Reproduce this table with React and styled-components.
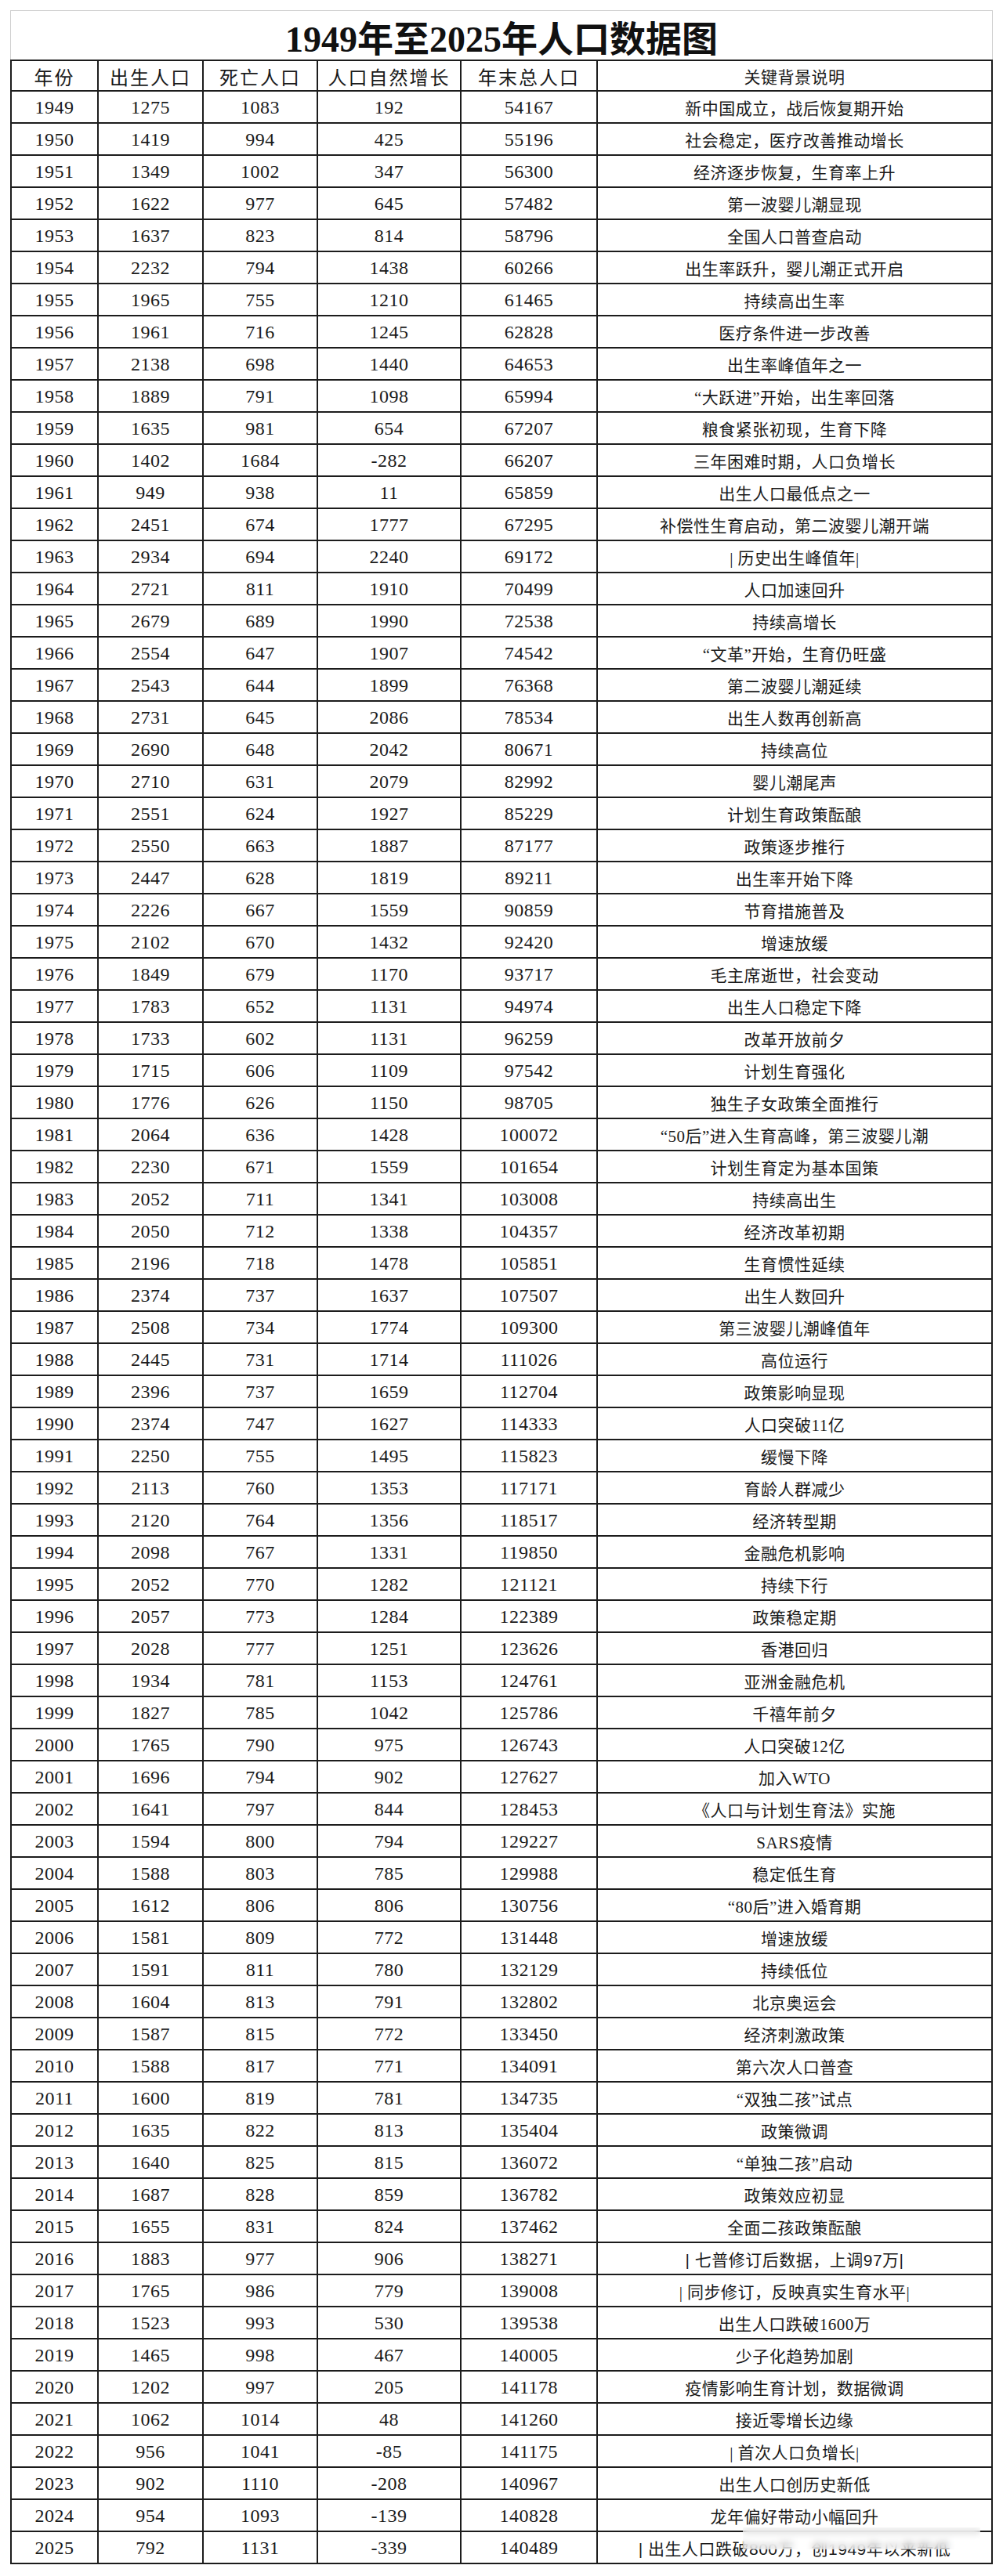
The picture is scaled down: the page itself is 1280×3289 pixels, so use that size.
import React from 'react'
import styled, { createGlobalStyle } from 'styled-components'

const GlobalStyle = createGlobalStyle`
    body {
        margin: 0;
        background: #ffffff;
    }
`

const raw = `1949 1275 1083 192 54167 新中国成立，战后恢复期开始
1950 1419 994 425 55196 社会稳定，医疗改善推动增长
1951 1349 1002 347 56300 经济逐步恢复，生育率上升
1952 1622 977 645 57482 第一波婴儿潮显现
1953 1637 823 814 58796 全国人口普查启动
1954 2232 794 1438 60266 出生率跃升，婴儿潮正式开启
1955 1965 755 1210 61465 持续高出生率
1956 1961 716 1245 62828 医疗条件进一步改善
1957 2138 698 1440 64653 出生率峰值年之一
1958 1889 791 1098 65994 “大跃进”开始，出生率回落
1959 1635 981 654 67207 粮食紧张初现，生育下降
1960 1402 1684 -282 66207 三年困难时期，人口负增长
1961 949 938 11 65859 出生人口最低点之一
1962 2451 674 1777 67295 补偿性生育启动，第二波婴儿潮开端
1963 2934 694 2240 69172 | 历史出生峰值年|
1964 2721 811 1910 70499 人口加速回升
1965 2679 689 1990 72538 持续高增长
1966 2554 647 1907 74542 “文革”开始，生育仍旺盛
1967 2543 644 1899 76368 第二波婴儿潮延续
1968 2731 645 2086 78534 出生人数再创新高
1969 2690 648 2042 80671 持续高位
1970 2710 631 2079 82992 婴儿潮尾声
1971 2551 624 1927 85229 计划生育政策酝酿
1972 2550 663 1887 87177 政策逐步推行
1973 2447 628 1819 89211 出生率开始下降
1974 2226 667 1559 90859 节育措施普及
1975 2102 670 1432 92420 增速放缓
1976 1849 679 1170 93717 毛主席逝世，社会变动
1977 1783 652 1131 94974 出生人口稳定下降
1978 1733 602 1131 96259 改革开放前夕
1979 1715 606 1109 97542 计划生育强化
1980 1776 626 1150 98705 独生子女政策全面推行
1981 2064 636 1428 100072 “50后”进入生育高峰，第三波婴儿潮
1982 2230 671 1559 101654 计划生育定为基本国策
1983 2052 711 1341 103008 持续高出生
1984 2050 712 1338 104357 经济改革初期
1985 2196 718 1478 105851 生育惯性延续
1986 2374 737 1637 107507 出生人数回升
1987 2508 734 1774 109300 第三波婴儿潮峰值年
1988 2445 731 1714 111026 高位运行
1989 2396 737 1659 112704 政策影响显现
1990 2374 747 1627 114333 人口突破11亿
1991 2250 755 1495 115823 缓慢下降
1992 2113 760 1353 117171 育龄人群减少
1993 2120 764 1356 118517 经济转型期
1994 2098 767 1331 119850 金融危机影响
1995 2052 770 1282 121121 持续下行
1996 2057 773 1284 122389 政策稳定期
1997 2028 777 1251 123626 香港回归
1998 1934 781 1153 124761 亚洲金融危机
1999 1827 785 1042 125786 千禧年前夕
2000 1765 790 975 126743 人口突破12亿
2001 1696 794 902 127627 加入WTO
2002 1641 797 844 128453 《人口与计划生育法》实施
2003 1594 800 794 129227 SARS疫情
2004 1588 803 785 129988 稳定低生育
2005 1612 806 806 130756 “80后”进入婚育期
2006 1581 809 772 131448 增速放缓
2007 1591 811 780 132129 持续低位
2008 1604 813 791 132802 北京奥运会
2009 1587 815 772 133450 经济刺激政策
2010 1588 817 771 134091 第六次人口普查
2011 1600 819 781 134735 “双独二孩”试点
2012 1635 822 813 135404 政策微调
2013 1640 825 815 136072 “单独二孩”启动
2014 1687 828 859 136782 政策效应初显
2015 1655 831 824 137462 全面二孩政策酝酿
2016 1883 977 906 138271 | 七普修订后数据，上调97万|
2017 1765 986 779 139008 | 同步修订，反映真实生育水平|
2018 1523 993 530 139538 出生人口跌破1600万
2019 1465 998 467 140005 少子化趋势加剧
2020 1202 997 205 141178 疫情影响生育计划，数据微调
2021 1062 1014 48 141260 接近零增长边缘
2022 956 1041 -85 141175 | 首次人口负增长|
2023 902 1110 -208 140967 出生人口创历史新低
2024 954 1093 -139 140828 龙年偏好带动小幅回升
2025 792 1131 -339 140489 | 出生人口跌破800万，创1949年以来新低`

const rows = raw.split('\n').map(line => {
    const parts = line.split(' ')
    return { cells: parts.slice(0, 5), note: parts.slice(5).join(' ') }
})

const sansNotes = ['2016', '2025']

const headers = ['年份', '出生人口', '死亡人口', '人口自然增长', '年末总人口', '关键背景说明']

const Page = styled.div`
    width: 1280px;
    min-height: 3289px;
    padding: 13px;
    box-sizing: border-box;
    background: #fff;
`

const Sheet = styled.div`
    width: 1254px;
`

const Title = styled.div`
    height: 63px;
    box-sizing: border-box;
    border: 1px solid #cfcfcf;
    border-bottom: none;
    display: flex;
    align-items: center;
    justify-content: center;
    font-family: "Liberation Serif", "Noto Sans CJK SC", serif;
    font-weight: 700;
    font-size: 46px;
    color: #111;
    padding-top: 2px;
`

const Row = styled.div`
    display: grid;
    grid-template-columns: 113px 134px 146px 183px 174px 504px;
    height: 41px;
`

const Cell = styled.div`
    position: relative;
    box-sizing: border-box;
    border-right: 2px solid #1c1c1c;
    border-bottom: 2px solid #1c1c1c;
    border-top: ${p => (p.$head ? '2px solid #1c1c1c' : 'none')};
    display: flex;
    align-items: center;
    justify-content: center;
    white-space: nowrap;
    font-family: ${p => (p.$sans
        ? '"Liberation Sans", "Noto Sans CJK SC", sans-serif'
        : '"Liberation Serif", "Noto Sans CJK SC", serif')};
    font-weight: 400;
    font-size: ${p => (p.$note ? '21px' : '24px')};
    letter-spacing: ${p => (p.$head && !p.$note ? '2px' : '0.5px')};
    color: #1a1a1a;
    padding-top: 1px;

    &:first-child {
        border-left: 2px solid #1c1c1c;
    }
`

const Smear = styled.div`
    position: absolute;
    left: 185px;
    right: 14px;
    top: -6px;
    height: 28px;
    background: rgba(255, 255, 255, 0.55);
    backdrop-filter: blur(4px);
`

export default function App() {
    return (
        <Page>
            <GlobalStyle />
            <Sheet>
                <Title>1949年至2025年人口数据图</Title>
                <Row>
                    {headers.map((h, i) => (
                        <Cell $head $note={i === 5} key={h}>{h}</Cell>
                    ))}
                </Row>
                {rows.map(r => (
                    <Row key={r.cells[0]}>
                        {r.cells.map((c, i) => (
                            <Cell key={i}>{c}</Cell>
                        ))}
                        <Cell $note $sans={sansNotes.includes(r.cells[0])}>
                            {r.note}
                            {r.cells[0] === '2025' && <Smear />}
                        </Cell>
                    </Row>
                ))}
            </Sheet>
        </Page>
    )
}
